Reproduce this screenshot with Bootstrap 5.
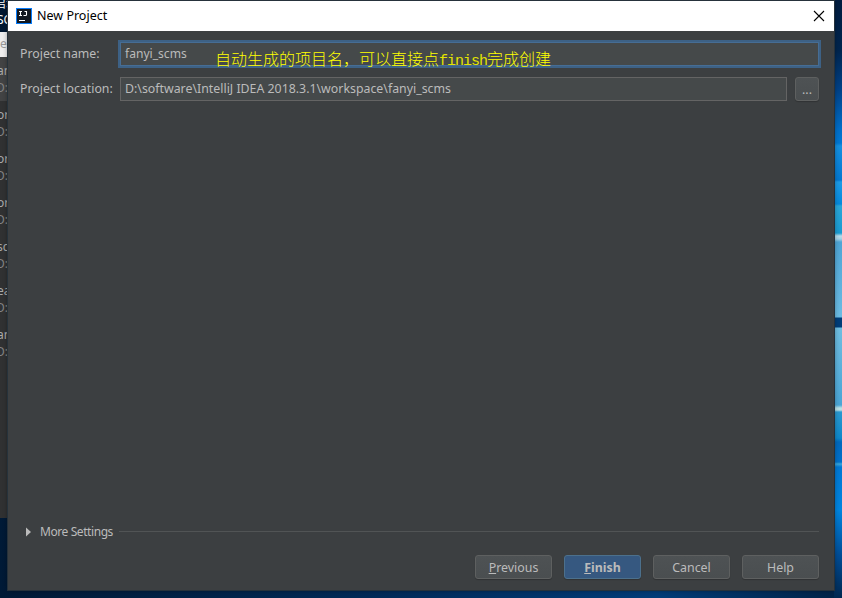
<!DOCTYPE html>
<html lang="en">
<head>
<meta charset="utf-8">
<meta name="viewport" content="width=device-width, initial-scale=1">
<title>New Project</title>
<link href="https://cdn.jsdelivr.net/npm/bootstrap@5.3.0/dist/css/bootstrap.min.css" rel="stylesheet">
<style>
body{width:842px;height:598px;font-family:"Noto Sans","Noto Sans CJK SC",sans-serif;font-size:12.5px;line-height:18px;color:#bbb;background:linear-gradient(90deg,#001a36,#002a58 45%,#003c78 78%,#002347)}
.wallpaper{left:834px;top:0;width:8px;height:598px;background:linear-gradient(#001d40 0,#00254e 50px,#004288 90px,#006fc9 130px,#0078d4 143px,#1590e0 146px,#0478d0 180px,#1c9be6 182px,#0589dc 204px,#2aa6d8 206px,#1a9bd0 233px,#b8dcea 236px,#a2d0e4 239px,#4fa5d5 242px,#6bbbe2 317px,#003d78 318px,#003d78 327px,#6fbde0 328px,#4aa5d5 405px,#b9dfe4 408px,#b9dfe4 410px,#2a98cf 412px,#0e88c9 438px,#0069bd 442px,#0070c9 462px,#38a6dd 464px,#0078d4 467px,#0085df 510px,#004d96 555px,#002850 598px)}
.behind{left:0;top:0;width:8px;height:518px;background:#303132;color:#aaa;font-size:12px}
.behind-head{height:32px;background:#001731;color:#fff;line-height:16px}
.behind-head div{margin-left:-6px;margin-top:-4px;white-space:nowrap}
.behind-head div+div{margin-left:-3px;margin-top:0}
.behind-search{height:25px;background:#eee;color:#999;line-height:24px}
.behind-item{height:44px;padding-top:5px;line-height:17px;white-space:nowrap}
.behind-item.active-row{background:#424344}
.behind-item div{margin-left:-3px;height:17px}
.behind-item div+div{color:#858585;margin-left:-4px}
.window{left:8px;top:1px;width:826px;height:589px;background:#3c3f41;box-shadow:0 0 0 1px #26323b,0 0 5px #0007}
.titlebar{height:30px;background:#fff;color:#000;padding:0 9px 0 8px;font-size:12.5px}
.titlebar span{margin-left:5px}
.form-area{padding:11px 15px 0 12px;gap:11px}
.field-label{width:100px;font-size:12.3px}
.field{height:24px;background:#45494a;border:1px solid #646464;border-radius:0;color:#bbb;padding:0 4px;line-height:21px;white-space:pre;font-size:12.35px}
.field.focused{border-color:#466d94;box-shadow:0 0 0 2px #3d6185;font-size:12.1px}
.dlg-btn{height:24px;border:1px solid #5e6060;border-radius:3px;background:linear-gradient(#4e5254,#4a4e50);color:#bbb;box-shadow:0 1px 1px #0003;font-size:12.4px;line-height:22px;padding:1px 0 0}
.dlg-btn.wide{width:77px}
.dlg-btn.main{background:#365880;border-color:#4c708c;font-weight:700}
.browse{width:24px}
.note{left:207px;top:46px;color:#ff0;font:300 16px/22px "Noto Sans CJK SC",sans-serif;white-space:nowrap}
.note span{font:15px "Liberation Mono",monospace;letter-spacing:-1px;color:#e4e400}
.rule{height:1px;background:#515455;margin:-1px 0 0 6px}
.more{padding:0 15px 0 17px;height:18px}
.more-label{margin-left:8px;font-size:12px;letter-spacing:-.42px}
.actions{gap:12px;padding:14px 15px 11px}
</style>
<script src="https://cdn.jsdelivr.net/npm/bootstrap@5.3.0/dist/js/bootstrap.bundle.min.js"></script>
</head>
<body class="position-relative overflow-hidden m-0">
<div class="wallpaper position-absolute"></div>
<aside class="behind position-absolute overflow-hidden">
  <div class="behind-head overflow-hidden"><div>启动</div><div>SC</div></div>
  <div class="behind-search">e</div>
  <div class="behind-item active-row"><div>an</div><div>D:\</div></div>
  <div class="behind-item"><div>or</div><div>D:\</div></div>
  <div class="behind-item"><div>or</div><div>D:\</div></div>
  <div class="behind-item"><div>or</div><div>D:\</div></div>
  <div class="behind-item"><div>sc</div><div>D:\</div></div>
  <div class="behind-item"><div>ea</div><div>D:\</div></div>
  <div class="behind-item"><div>an</div><div>D:\</div></div>
</aside>
<main class="window position-absolute d-flex flex-column">
  <header class="titlebar d-flex align-items-center">
    <svg width="16" height="16" viewBox="0 0 16 16"><path fill="#087cfa" d="M0 0h16v16H0z"/><path fill="#111820" d="M1 1h14v14H1z"/><path d="M3 3.5h3M4.5 3v5M3 7.5h3M10.5 3v3.7q0 .8-1 .8H7.5M8.5 3.5h2M3 12.5h6" fill="none" stroke="#fff" stroke-width="1.1"/></svg>
    <span>New Project</span>
    <svg class="ms-auto" width="12" height="12" viewBox="0 0 12 12"><path d="M1 1l10 10M11 1L1 11" stroke="#000" stroke-width="1.1"/></svg>
  </header>
  <section class="form-area d-flex flex-column">
    <div class="d-flex align-items-center"><label class="field-label">Project name:</label><div class="field focused flex-grow-1">fanyi_scms</div></div>
    <div class="d-flex align-items-center"><label class="field-label">Project location:</label><div class="field flex-grow-1">D:\software\IntelliJ IDEA 2018.3.1\workspace\fanyi_scms</div><button class="btn dlg-btn browse ms-2">...</button></div>
  </section>
  <div class="note position-absolute">自动生成的项目名，可以直接点<span>finish</span>完成创建</div>
  <div class="more d-flex align-items-center mt-auto">
    <svg width="7" height="10" viewBox="0 0 7 10"><path d="M1 0.5L6 5L1 9.5z" fill="#bbb"/></svg>
    <span class="more-label">More Settings</span><div class="rule flex-grow-1"></div>
  </div>
  <footer class="actions d-flex justify-content-end">
    <button class="btn dlg-btn wide"><u>P</u>revious</button><button class="btn dlg-btn wide main"><u>F</u>inish</button><button class="btn dlg-btn wide">Cancel</button><button class="btn dlg-btn wide">Help</button>
  </footer>
</main>
</body>
</html>
